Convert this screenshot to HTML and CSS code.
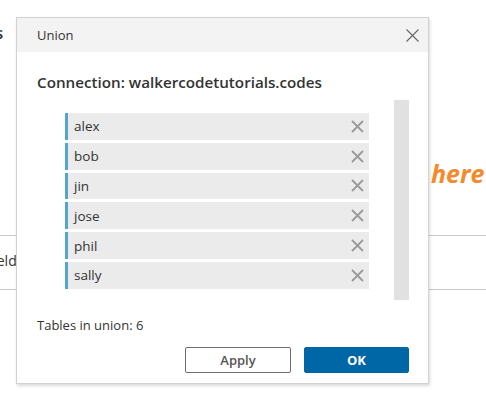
FILE: index.html
```html
<!DOCTYPE html>
<html>
<head>
<meta charset="utf-8">
<link rel="stylesheet" href="styles.css">
</head>
<body>
<div class="backdrop">
  <span class="bg-char">s</span>
  <span class="bg-here">here</span>
  <div class="bg-line bg-line-top"></div>
  <span class="bg-field">Field</span>
  <div class="bg-line bg-line-bottom"></div>
</div>
<div class="dialog">
  <div class="dialog-header">
    <span class="dialog-title">Union</span>
    <svg class="close-icon" width="13" height="13" viewBox="0 0 13 13"><path d="M0.5 0.5 L12.5 12.5 M12.5 0.5 L0.5 12.5" stroke="#666" stroke-width="1.1" fill="none"/></svg>
  </div>
  <div class="dialog-body">
    <div class="connection">Connection: walkercodetutorials.codes</div>
    <div class="list-area">
      <div class="table-list">
        <div class="table-item"><span class="table-name">alex</span><svg class="remove-icon" width="13" height="13" viewBox="0 0 13 13"><path d="M1 1 L12 12 M12 1 L1 12" stroke="#9a9a9a" stroke-width="1.8" fill="none"/></svg></div>
        <div class="table-item"><span class="table-name">bob</span><svg class="remove-icon" width="13" height="13" viewBox="0 0 13 13"><path d="M1 1 L12 12 M12 1 L1 12" stroke="#9a9a9a" stroke-width="1.8" fill="none"/></svg></div>
        <div class="table-item"><span class="table-name">jin</span><svg class="remove-icon" width="13" height="13" viewBox="0 0 13 13"><path d="M1 1 L12 12 M12 1 L1 12" stroke="#9a9a9a" stroke-width="1.8" fill="none"/></svg></div>
        <div class="table-item"><span class="table-name">jose</span><svg class="remove-icon" width="13" height="13" viewBox="0 0 13 13"><path d="M1 1 L12 12 M12 1 L1 12" stroke="#9a9a9a" stroke-width="1.8" fill="none"/></svg></div>
        <div class="table-item"><span class="table-name">phil</span><svg class="remove-icon" width="13" height="13" viewBox="0 0 13 13"><path d="M1 1 L12 12 M12 1 L1 12" stroke="#9a9a9a" stroke-width="1.8" fill="none"/></svg></div>
        <div class="table-item"><span class="table-name">sally</span><svg class="remove-icon" width="13" height="13" viewBox="0 0 13 13"><path d="M1 1 L12 12 M12 1 L1 12" stroke="#9a9a9a" stroke-width="1.8" fill="none"/></svg></div>
      </div>
      <div class="scrollbar"></div>
    </div>
    <div class="count">Tables in union: 6</div>
    <div class="actions">
      <button class="btn btn-apply">Apply</button>
      <button class="btn btn-ok">OK</button>
    </div>
  </div>
</div>
</body>
</html>
```
FILE: styles.css
```css
html, body {
  margin: 0;
  padding: 0;
  background: #ffffff;
}
body {
  width: 486px;
  height: 401px;
  position: relative;
  overflow: hidden;
  font-family: "Open Sans", "Liberation Sans", sans-serif;
  color: #333333;
}
.backdrop {
  position: absolute;
  inset: 0;
}
.bg-char {
  position: absolute;
  left: -5px;
  top: 21px;
  font-size: 17px;
  font-weight: 600;
  color: #333;
}
.bg-here {
  position: absolute;
  left: 431px;
  top: 157px;
  font-size: 25px;
  font-weight: 700;
  font-style: italic;
  color: #f58a2d;
  line-height: 32px;
}
.bg-line {
  position: absolute;
  left: 0;
  right: 0;
  height: 1px;
  background: #c8c8c8;
}
.bg-line-top { top: 235px; }
.bg-line-bottom { top: 289px; }
.bg-field {
  position: absolute;
  left: -14px;
  top: 251px;
  font-size: 14px;
  line-height: 20px;
  color: #333;
}
.dialog {
  position: absolute;
  left: 16px;
  top: 17px;
  width: 411px;
  height: 365px;
  background: #ffffff;
  border: 1px solid #d2d2d2;
  box-shadow: 1px 2px 3px rgba(0, 0, 0, 0.15);
  display: flex;
  flex-direction: column;
}
.dialog-header {
  height: 34px;
  background: #f3f3f3;
  display: flex;
  align-items: center;
  justify-content: space-between;
  padding: 0 9px 0 20px;
}
.dialog-title {
  font-size: 13px;
  color: #333;
}
.close-icon {
  display: block;
}
.dialog-body {
  flex: 1;
  display: flex;
  flex-direction: column;
  padding: 0 19px 0 20px;
}
.connection {
  margin-top: 20px;
  font-size: 15.2px;
  line-height: 20px;
  font-weight: 600;
  color: #333;
}
.list-area {
  margin-top: 8px;
  height: 200px;
  display: flex;
  justify-content: space-between;
}
.table-list {
  margin-left: 28px;
  padding-top: 13px;
  display: flex;
  flex-direction: column;
  gap: 3px;
}
.table-item {
  width: 304px;
  height: 26.8px;
  background: #ebebeb;
  border-left: 3px solid #52a6cc;
  display: flex;
  align-items: center;
  justify-content: space-between;
  padding: 0 5px 0 6px;
  box-sizing: border-box;
}
.table-name {
  font-size: 13.5px;
  color: #333;
}
.remove-icon {
  display: block;
}
.scrollbar {
  width: 15px;
  height: 200px;
  background: #e1e1e1;
}
.count {
  margin-top: 15px;
  font-size: 13px;
  line-height: 20px;
  color: #333;
}
.actions {
  margin-top: 12px;
  display: flex;
  justify-content: flex-end;
  gap: 13px;
}
.btn {
  font-family: "Open Sans", "Liberation Sans", sans-serif;
  font-size: 13px;
  font-weight: 600;
  height: 26px;
  border-radius: 2px;
  padding: 0;
  margin: 0;
}
.btn-apply {
  width: 106px;
  background: #ffffff;
  border: 1px solid #6e6e6e;
  color: #555;
}
.btn-ok {
  width: 105px;
  background: #0067a6;
  border: 1px solid #0067a6;
  color: #ffffff;
  font-weight: 700;
}
```
